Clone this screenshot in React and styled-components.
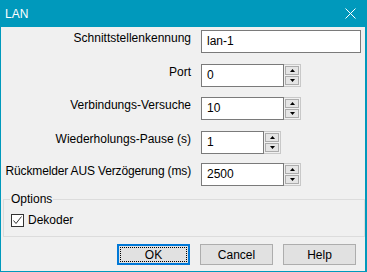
import styled, { createGlobalStyle } from 'styled-components'

// Windows-Dialog "LAN" (WinForms Look)
const GlobalStyle = createGlobalStyle`
  html, body {
    margin: 0;
    padding: 0;
    background: #f0f0f0;
  }
  * { box-sizing: border-box; }
`

const Window = styled.div`
  width: 367px;
  height: 272px;
  display: flex;
  flex-direction: column;
  border: 1px solid #0099bc;
  border-top: none;
  border-right-width: 2px;
  background: #f0f0f0;
  font-family: "Liberation Sans", Arial, sans-serif;
  font-size: 12px;
  color: #000;
`

const TitleBar = styled.div`
  height: 27px;
  margin: 0 -2px 0 -1px;
  padding: 0 11px 0 5px;
  display: flex;
  align-items: center;
  justify-content: space-between;
  background: #0099bc;
  color: #fff;
  font-size: 12px;
`

const Body = styled.div`
  flex: 1;
  display: flex;
  flex-direction: column;
  padding-top: 3px;
`

const Form = styled.div`
  display: flex;
  flex-direction: column;
`

const Row = styled.div`
  display: grid;
  grid-template-columns: 190px auto;
  column-gap: 10px;
  align-items: start;
  margin-top: ${p => p.$mt || 0}px;
`

const Label = styled.label`
  text-align: right;
  line-height: 15px;
  padding-top: 1px;
  white-space: nowrap;
  letter-spacing: ${p => p.$tight ? '-0.15px' : 'normal'};
`

const Field = styled.div`
  display: flex;
  height: 23px;
`

const TextBox = styled.div`
  width: ${p => p.$w}px;
  height: 23px;
  border: 1px solid #7a7a7a;
  background: #fff;
  padding-left: 5px;
  line-height: 21px;
`

const Spinner = styled.div`
  width: 17px;
  height: 23px;
  display: flex;
  flex-direction: column;
  gap: 1px;
  padding: 1px;
  border: 1px solid #c8c8c8;
  border-left: none;
  background: #f0f0f0;
`

const SpinBtn = styled.div`
  flex: 1;
  display: flex;
  align-items: center;
  justify-content: center;
  background: #e5e5e5;
  border: 1px solid #acacac;
`

const Options = styled.fieldset`
  margin: 6px 0 0 2px;
  width: 362px;
  height: 45px;
  padding: 6px 0 0 7px;
  border: 1px solid #dcdcdc;
  legend {
    padding: 0 1px;
    margin-left: -1px;
    line-height: 15px;
  }
`

const Check = styled.label`
  display: flex;
  align-items: center;
  gap: 4px;
  line-height: 15px;
`

const CheckBox = styled.span`
  width: 13px;
  height: 13px;
  border: 1px solid #333;
  background: #fff;
  display: flex;
  align-items: center;
  justify-content: center;
`

const Buttons = styled.div`
  display: flex;
  justify-content: flex-end;
  gap: 10px;
  padding: 7px 9px 0 0;
`

const Button = styled.button`
  position: relative;
  width: 73px;
  height: 21px;
  padding: 0;
  font: inherit;
  color: #000;
  background: #e1e1e1;
  border: 1px solid ${p => (p.$default ? '#0078d7' : '#adadad')};
  box-shadow: ${p => (p.$default ? 'inset 0 0 0 1px #0078d7' : 'none')};
  &::after {
    content: '';
    display: ${p => (p.$default ? 'block' : 'none')};
    position: absolute;
    inset: 2px;
    border: 1px dotted #000;
  }
`

function Arrow({ up }) {
  return (
    <svg width="5" height="3" viewBox="0 0 5 3">
      <path d={up ? 'M2.5 0L5 3H0Z' : 'M0 0H5L2.5 3Z'} fill="#000" />
    </svg>
  )
}

function NumField({ value, w }) {
  return (
    <Field>
      <TextBox $w={w}>{value}</TextBox>
      <Spinner>
        <SpinBtn><Arrow up /></SpinBtn>
        <SpinBtn><Arrow /></SpinBtn>
      </Spinner>
    </Field>
  )
}

export default function App() {
  return (
    <>
      <GlobalStyle />
      <Window>
        <TitleBar>
          <span>LAN</span>
          <svg width="11" height="11" viewBox="0 0 11 11">
            <path d="M0.5 0.5L10.5 10.5M10.5 0.5L0.5 10.5" stroke="#fff" strokeWidth="1" />
          </svg>
        </TitleBar>
        <Body>
          <Form>
            <Row>
              <Label>Schnittstellenkennung</Label>
              <Field><TextBox $w={160}>lan-1</TextBox></Field>
            </Row>
            <Row $mt={11}>
              <Label>Port</Label>
              <NumField value="0" w={83} />
            </Row>
            <Row $mt={10}>
              <Label>Verbindungs-Versuche</Label>
              <NumField value="10" w={83} />
            </Row>
            <Row $mt={11}>
              <Label>Wiederholungs-Pause (s)</Label>
              <NumField value="1" w={63} />
            </Row>
            <Row $mt={9}>
              <Label $tight>Rückmelder AUS Verzögerung (ms)</Label>
              <NumField value="2500" w={83} />
            </Row>
          </Form>
          <Options>
            <legend>Options</legend>
            <Check>
              <CheckBox>
                <svg width="11" height="11" viewBox="0 0 11 11">
                  <path d="M1.5 5.5L4 8.5L9.5 1.5" stroke="#333" strokeWidth="1" fill="none" />
                </svg>
              </CheckBox>
              Dekoder
            </Check>
          </Options>
          <Buttons>
            <Button $default>OK</Button>
            <Button>Cancel</Button>
            <Button>Help</Button>
          </Buttons>
        </Body>
      </Window>
    </>
  )
}
